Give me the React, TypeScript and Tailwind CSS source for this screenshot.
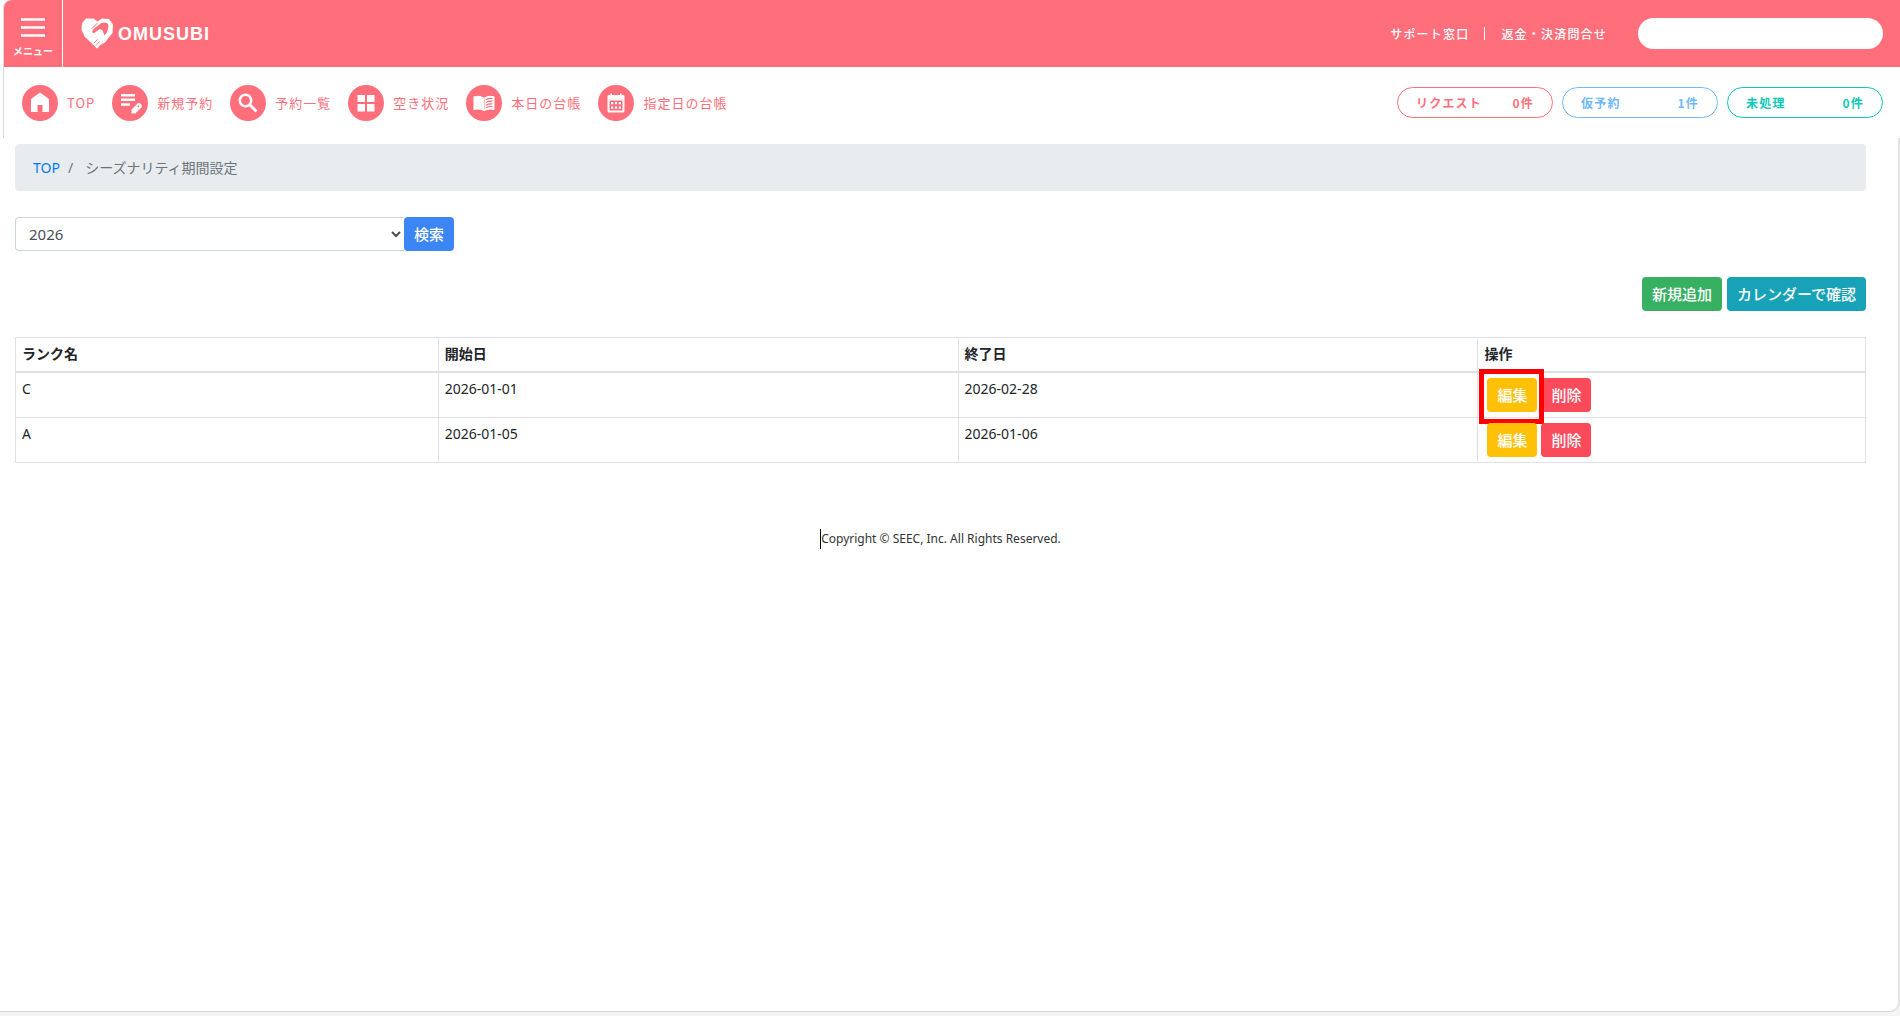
import { ReactNode, useState } from "react";

type NavItem = { label: string; icon: ReactNode };
type Counter = { label: string; count: number; tone: string };
type Season = { rank: string; start: string; end: string; marked?: boolean };

const navItems: NavItem[] = [
  {
    label: "TOP",
    icon: <path d="M18 7.5 27 14V27H20.5V20H15.5V27H9V14Z" fill="#fff" />,
  },
  {
    label: "新規予約",
    icon: (
      <>
        <path d="M9 10.3H23M9 14.8H23M9 19.5H18" stroke="#fff" strokeWidth="2.4" />
        <path d="M19.5 28.500V24.800L25.500 18.500Q27 17.300 28.300 18.600L29.500 19.800Q30.600 21.200 29.400 22.600L23.400 28.500Z" fill="#fff" />
        <circle cx="26.300" cy="21.300" r="0.9" fill="#ff6f7b" />
      </>
    ),
  },
  {
    label: "予約一覧",
    icon: (
      <>
        <circle cx="15.5" cy="15.500" r="5.7" fill="none" stroke="#fff" strokeWidth="2.5" />
        <path d="M19.5 19.500 26.5 26.500" stroke="#fff" strokeWidth="2.9" />
      </>
    ),
  },
  {
    label: "空き状況",
    icon: <path d="M9.5 10H17V17H9.5ZM19 10H26.5V17H19ZM9.5 19H17V26.5H9.5ZM19 19H26.5V26.5H19Z" fill="#fff" />,
  },
  {
    label: "本日の台帳",
    icon: (
      <>
        <path d="M18 12.5Q13 9.5 7.5 11.5V25Q13 23.5 18 26Q23 23.5 28.5 25V11.5Q23 9.5 18 12.5Z" fill="#fff" />
        <path
          d="M20 14.8Q23 13 26.5 13.5M20 17.5Q23 15.8 26.5 16.2M20 20.2Q23 18.5 26.5 18.9M20 22.8Q23 21.2 26.5 21.6"
          stroke="#ff6f7b"
          strokeWidth="1.2"
          fill="none"
        />
        <path d="M18.7 12.5V24" stroke="#ff6f7b" strokeWidth="0.5" />
      </>
    ),
  },
  {
    label: "指定日の台帳",
    icon: (
      <>
        <path d="M11 10H12.5V8.5H14V10H22V8.5H23.5V10H25Q26.5 10 26.5 11.5V26Q26.5 27.5 25 27.5H11Q9.5 27.5 9.5 26V11.5Q9.5 10 11 10Z" fill="#fff" />
        <path d="M11.5 15.5H24.5V25.5H11.5Z" fill="#ff6f7b" />
        <path
          d="M13 17H15.2V19.2H13ZM16.9 17H19.1V19.2H16.9ZM20.8 17H23V19.2H20.8ZM13 21.5H15.2V23.7H13ZM16.9 21.5H19.1V23.7H16.9ZM20.8 21.5H23V23.7H20.8Z"
          fill="#fff"
        />
      </>
    ),
  },
];

const counters: Counter[] = [
  { label: "リクエスト", count: 0, tone: "border-[#ff6f7b] text-[#ff6f7b]" },
  { label: "仮予約", count: 1, tone: "border-[#6fb9fb] text-[#6fb9fb]" },
  { label: "未処理", count: 0, tone: "border-[#0cc9b5] text-[#0cc9b5]" },
];

const seasons: Season[] = [
  { rank: "C", start: "2026-01-01", end: "2026-02-28", marked: true },
  { rank: "A", start: "2026-01-05", end: "2026-01-06" },
];

const Logo = () => (
  <a href="#" className="ml-[18px] flex items-center gap-1 text-white">
    <svg width="33" height="31" viewBox="0 0 33 31" aria-hidden="true">
      <path d="M5 0.5 12.5 0.5 16.5 3.5 21 0.5 28 1 32 6.500 31.500 15 27 20.500 24.500 24 16 30.5 4 19 0.5 12 1 5Z" fill="#fff" />
      <path d="M11 14 12 11.500 20 5.300Q23 3.800 25.700 5 28 6.500 27.300 9.500L26 14.300 23.500 17.500 21.500 12.200 18.800 11 14 14.500Q12 15.500 11 14Z" fill="#ff6f7b" />
      <path d="M16.500 5 11 10.500M13 25 16.500 21.500M15 27.300 19 23.300M17.500 29.300 21.500 25.300" stroke="#ff6f7b" strokeWidth="0.9" fill="none" />
    </svg>
    <span className="font-['Liberation_Sans',sans-serif] text-[18px] font-bold leading-6 tracking-[1px]">OMUSUBI</span>
  </a>
);

const Header = () => (
  <header className="flex h-[67px] items-center rounded-tl-lg bg-[#ff6f7b] pr-[17px] text-white">
    <button className="flex h-full w-[59px] flex-col items-center border-r border-white pt-[18px]">
      <svg width="24" height="19" viewBox="0 0 24 19" aria-hidden="true">
        <path d="M0 1.500H24M0 9.500H24M0 17.500H24" stroke="#fff" strokeWidth="2.7" />
      </svg>
      <span className="mt-2 text-[10px] font-bold leading-3">メニュー</span>
    </button>
    <Logo />
    <div className="ml-auto flex items-center text-xs font-medium tracking-widest">
      <a href="#">サポート窓口</a>
      <span className="ml-[15px] mr-4 h-[13px] w-px bg-white" />
      <a href="#">返金・決済問合せ</a>
    </div>
    <input aria-label="検索" className="ml-[31px] h-[31px] w-[245px] rounded-full bg-white px-4 text-sm text-gray-700 outline-none" />
  </header>
);

const Nav = () => (
  <nav className="flex h-[71px] items-center justify-between pl-[18px] pr-[17px]">
    <div className="flex items-center gap-[17px]">
      {navItems.map((item) => (
        <a key={item.label} href="#" className="flex items-center gap-[9px] text-[13px] leading-5 tracking-[1px] text-[#ff6f7b]">
          <svg width="36" height="36" viewBox="0 0 36 36" aria-hidden="true">
            <circle cx="18" cy="18" r="18" fill="#ff6f7b" />
            {item.icon}
          </svg>
          {item.label}
        </a>
      ))}
    </div>
    <div className="flex gap-[9px]">
      {counters.map((item) => (
        <a
          key={item.label}
          href="#"
          className={`flex h-[31px] w-[156px] items-center justify-between rounded-full border px-[18px] text-xs font-bold tracking-widest ${item.tone}`}
        >
          <span>{item.label}</span>
          <span>{item.count}件</span>
        </a>
      ))}
    </div>
  </nav>
);

const Button = ({ color, children }: { color: string; children: ReactNode }) => (
  <button className={`h-[34px] rounded px-[10px] text-[15px] font-medium leading-5 text-white ${color}`}>{children}</button>
);

const SeasonTable = () => (
  <table className="mt-[26px] w-full table-fixed border-collapse border border-[#dee2e6] text-sm text-[#212529]">
    <colgroup>
      <col className="w-[22.85%]" />
      <col className="w-[28.1%]" />
      <col className="w-[28.1%]" />
      <col />
    </colgroup>
    <thead>
      <tr className="h-[34px] border-b-2 border-[#dee2e6] text-left">
        {["ランク名", "開始日", "終了日", "操作"].map((title) => (
          <th key={title} className="border-x border-[#dee2e6] px-[6px] font-bold">
            {title}
          </th>
        ))}
      </tr>
    </thead>
    <tbody>
      {seasons.map((season) => (
        <tr key={season.rank} className="border-b border-[#dee2e6] align-top">
          <td className="border-x border-[#dee2e6] px-[6px] py-[6px]">{season.rank}</td>
          <td className="border-x border-[#dee2e6] px-[6px] py-[6px]">{season.start}</td>
          <td className="border-x border-[#dee2e6] px-[6px] py-[6px]">{season.end}</td>
          <td className="border-x border-[#dee2e6] py-[5px] pl-[9px]">
            <div className="relative flex gap-1">
              <Button color="bg-[#ffc107]">編集</Button>
              <Button color="bg-[#fb4b5b]">削除</Button>
              {season.marked && (
                <span className="pointer-events-none absolute -left-2 -top-[9px] h-[55px] w-[65px] border-[5px] border-[#ff0000]" />
              )}
            </div>
          </td>
        </tr>
      ))}
    </tbody>
  </table>
);

export default function App() {
  const [year, setYear] = useState("2026");

  return (
    <div className="flex min-h-screen flex-col bg-[#f4f4f4] pb-1 font-['Noto_Sans_CJK_JP',sans-serif]">
      <div className="flex-1 rounded-br-[10px] border-b border-r-2 border-b-[#d4d4d4] border-r-[#e4e4e4] bg-white">
        <div className="-mr-[2px] bg-white pl-[3px]">
          <div className="rounded-tl-lg border-l border-[#d9d9d9]">
            <Header />
            <Nav />
          </div>
        </div>

        <main className="mt-[6px] pl-[15px] pr-8 font-['Noto_Sans','Noto_Sans_CJK_JP',sans-serif]">
          <div className="flex h-[47px] items-center rounded bg-[#e9ecef] px-[18px] text-sm text-[#6c757d]">
            <a href="#" className="text-[#007bff]">TOP</a>
            <span className="pl-2 pr-3">/</span>
            <span>シーズナリティ期間設定</span>
          </div>

          <form className="mt-[26px] flex" onSubmit={(e) => e.preventDefault()}>
            <select
              aria-label="年"
              value={year}
              onChange={(e) => setYear(e.target.value)}
              className="h-[34px] w-[389px] rounded-l border border-r-0 border-[#ced4da] bg-white pl-[9px] text-[15px] text-[#495057]"
            >
              <option>2025</option>
              <option>2026</option>
              <option>2027</option>
            </select>
            <Button color="bg-[#3b86f4]">検索</Button>
          </form>

          <div className="mt-[26px] flex justify-end gap-[5px]">
            <Button color="bg-[#38b062]">新規追加</Button>
            <Button color="bg-[#17a2b8]">カレンダーで確認</Button>
          </div>

          <SeasonTable />

          <footer className="mt-[66px] flex justify-center text-xs leading-5 text-[#333]">
            <span className="border-l border-black">Copyright © SEEC, Inc. All Rights Reserved.</span>
          </footer>
        </main>
      </div>
    </div>
  );
}
